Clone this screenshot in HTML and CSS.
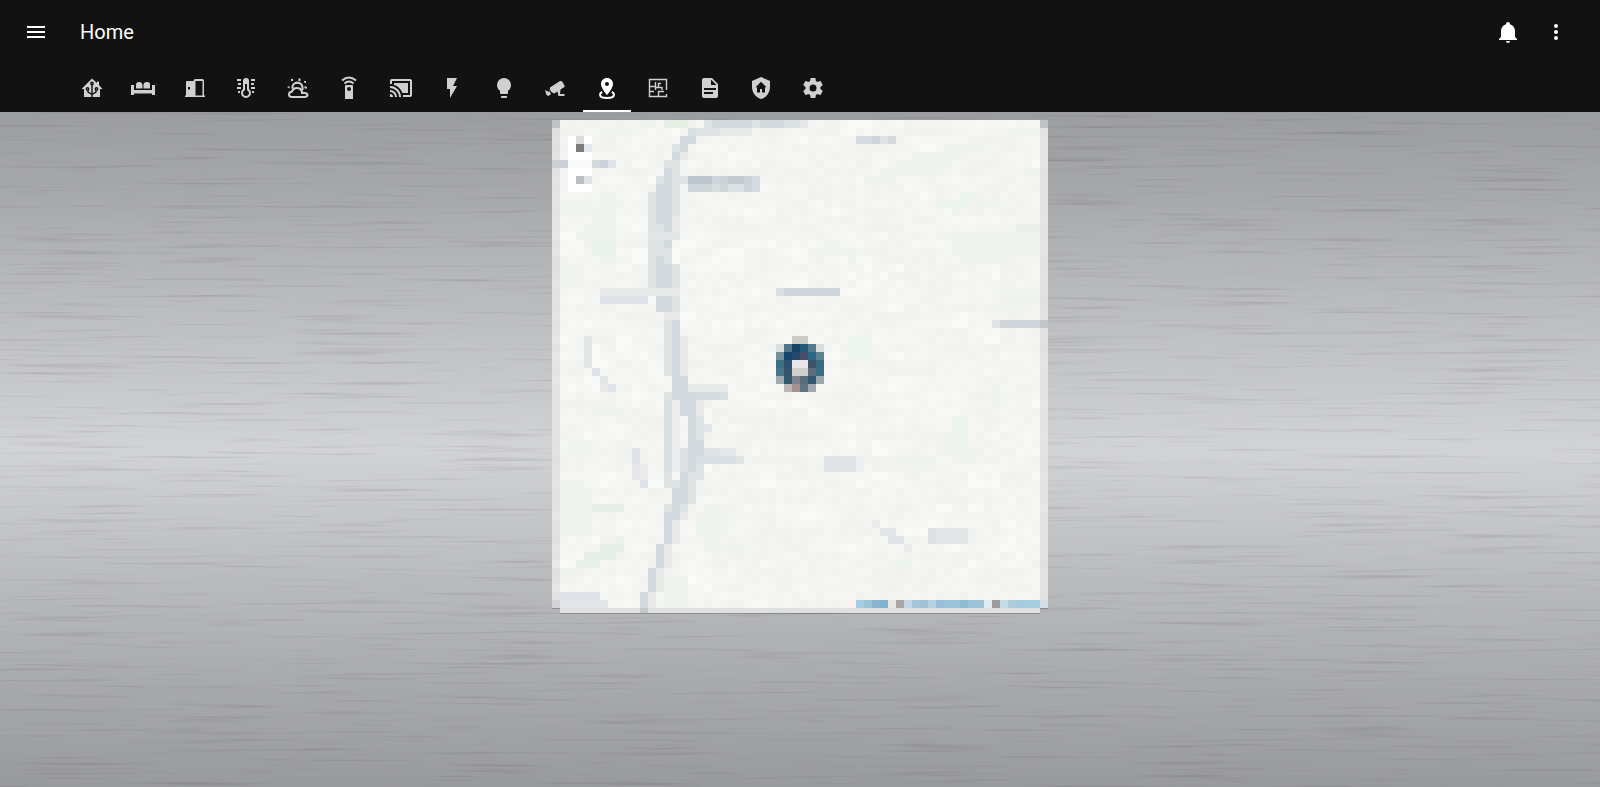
FILE: index.html
```
<!DOCTYPE html>
<html lang="en">
<head>
<meta charset="utf-8">
<meta name="viewport" content="width=device-width, initial-scale=1">
<title>Home</title>
<link rel="stylesheet" href="styles.css">
</head>
<body>
<header class="header">
  <div class="toolbar">
    <button class="icon-button" type="button" aria-label="Menu"><svg class="icon" viewBox="0 0 24 24"><path d="M3 6H21V8H3V6M3 11H21V13H3V11M3 16H21V18H3V16Z"/></svg></button>
    <h1 class="title">Home</h1>
    <button class="icon-button" type="button" aria-label="Notifications"><svg class="icon" viewBox="0 0 24 24"><path d="M21 19V20H3V19L5 17V11C5 7.900 7.030 5.170 10 4.290V4A2 2 0 0 1 14 4V4.290C16.970 5.170 19 7.900 19 11V17L21 19M14 21A2 2 0 0 1 10 21"/></svg></button>
    <button class="icon-button" type="button" aria-label="More options"><svg class="icon" viewBox="0 0 24 24"><path d="M12 16A2 2 0 1 1 12 20A2 2 0 0 1 12 16M12 10A2 2 0 1 1 12 14A2 2 0 0 1 12 10M12 4A2 2 0 1 1 12 8A2 2 0 0 1 12 4Z"/></svg></button>
  </div>
  <nav class="tabs" aria-label="Views">
    <a class="tab" href="#home" aria-label="Home"><svg class="icon" viewBox="0 0 24 24"><path d="M12 2.500L17 7V5.500H19V9L22.500 13H20V21H4V13H1.500Z"/><g class="cut"><path d="M12 9V21M12 18.500L8 16V14M12 18.500L16 16V14"/><circle class="dot" cx="12" cy="7.500" r="1.200"/><circle class="dot" cx="7.500" cy="13" r="1.200"/><circle class="dot" cx="16.500" cy="13" r="1.200"/></g></svg></a>
    <a class="tab" href="#bedroom" aria-label="Bedroom"><svg class="icon" viewBox="0 0 24 24"><path d="M0 9H3V14H21V9H24V19H21V17.500H3V19H0ZM5 12.500V9Q5 6 8 6T11.500 9V12.500ZM12.500 12.500V9Q12.500 6 16 6T19 9V12.500Z"/></svg></a>
    <a class="tab" href="#doors" aria-label="Doors"><svg class="icon" viewBox="0 0 24 24"><path fill-rule="evenodd" d="M2 19.500H3V6Q3 5 4 5H10.500V5Q10.500 3 12.500 3H19Q21 3 21 5V19.500H22V21H2ZM12.500 5V19.500H19.500V5ZM5 11V13.500H7V11Z"/></svg></a>
    <a class="tab" href="#climate" aria-label="Climate"><svg class="icon" viewBox="0 0 24 24"><path fill-rule="evenodd" d="M9 5A3 3 0 0 1 15 5V13A5 5 0 1 1 9 13ZM11 8V14.200A3 3 0 1 0 13 14.200V8Z"/><path d="M3 3H7V5H3ZM4 7H7V9H4ZM3 11H7V13H3ZM4 15H6V17H4ZM17 3H21V5H17ZM17 7H20V9H17ZM17 11H21V13H17ZM18 15H20V17H18Z"/></svg></a>
    <a class="tab" href="#weather" aria-label="Weather"><svg class="icon" viewBox="0 0 24 24"><path class="line" d="M6 21Q3 21 3 18.500Q3 16 6 15.500Q7.500 11.500 11.500 12Q14.500 12 16 15.500V17H19Q21.500 17.500 21.500 19T19 21ZM6.500 12.500Q6 9 8.500 7.500Q12 5.500 15 8Q17 10 16.500 14"/><path d="M5 3H7V5H5ZM12.500 2.500H14.500V5H12.500ZM1 11L3.500 10V12.500ZM18.500 10L21 11V12.500H18.500ZM18 5H20V7L18 6.500Z"/></svg></a>
    <a class="tab" href="#remote" aria-label="Remote"><svg class="icon" viewBox="0 0 24 24"><path fill-rule="evenodd" d="M9 9H15Q16 9 16 10V23H8V10Q8 9 9 9M12 11A2 2 0 1 0 12 15A2 2 0 0 0 12 11"/><path class="line" d="M7.500 7.500Q12 3.500 16.500 7.500M5 4.500Q12-1.500 19 4.500"/></svg></a>
    <a class="tab" href="#media" aria-label="Media"><svg class="icon" viewBox="0 0 24 24"><path d="M21 3H3C1.890 3 1 3.890 1 5V8H3V5H21V19H14V21H21A2 2 0 0 0 23 19V5C23 3.890 22.100 3 21 3M1 10V12A9 9 0 0 1 10 21H12C12 14.920 7.070 10 1 10M19 7H5V8.630C8.960 9.910 12.090 13.040 13.370 17H19M1 14V16A5 5 0 0 1 6 21H8A7 7 0 0 0 1 14M1 18V21H4A3 3 0 0 0 1 18Z"/></svg></a>
    <a class="tab" href="#energy" aria-label="Energy"><svg class="icon" viewBox="0 0 24 24"><path d="M7 2V13H10V22L17 10H13L17 2H7Z"/></svg></a>
    <a class="tab" href="#lights" aria-label="Lights"><svg class="icon" viewBox="0 0 24 24"><path d="M12 2A7 7 0 0 0 5 9C5 11.380 6.190 13.470 8 14.740V17A1 1 0 0 0 9 18H15A1 1 0 0 0 16 17V14.740C17.810 13.470 19 11.380 19 9A7 7 0 0 0 12 2M9 21A1 1 0 0 0 10 22H14A1 1 0 0 0 15 21V20H9V21Z"/></svg></a>
    <a class="tab" href="#cameras" aria-label="Cameras"><svg class="icon" viewBox="0 0 24 24"><path d="M7 11.500L17 5Q18.500 4.500 19.500 6L21.500 9.500V11L17.500 13.500L17 18H21.500V20H15.500L14.500 15.500L11 17.500Q8.500 17 7 14ZM2 14L6 16V14.500L8 18L5.500 20L3.500 19Z"/></svg></a>
    <a class="tab tab-active" href="#map" aria-label="Map" aria-current="page"><svg class="icon" viewBox="0 0 24 24"><path fill-rule="evenodd" d="M12 2C15.500 2 18 4.500 18 8C18 12.500 12 19 12 19S6 12.500 6 8C6 4.500 8.500 2 12 2M12 6A2 2 0 1 0 12 10A2 2 0 0 0 12 6"/><path class="line" d="M7.200 16Q5 17 5 18.500Q5 22 12 22T19 18.500Q19 17 16.800 16"/></svg></a>
    <a class="tab" href="#floorplan" aria-label="Floor plan"><svg class="icon" viewBox="0 0 24 24"><path class="line thin" d="M20.500 14V3.500H3.500V20.500H20.500V18M4 10.500H9.500V6M4 15.500H8M12.500 7V11.500H9.500V14M12.500 7.500H15M12.500 11.500H16V14M12.500 20V15.500H18"/></svg></a>
    <a class="tab" href="#logs" aria-label="Logs"><svg class="icon" viewBox="0 0 24 24"><path d="M13 9H18.500L13 3.500V9M6 2H14L20 8V20A2 2 0 0 1 18 22H6C4.890 22 4 21.100 4 20V4C4 2.890 4.890 2 6 2M15 18V16H6V18H15M18 14V12H6V14H18Z"/></svg></a>
    <a class="tab" href="#security" aria-label="Security"><svg class="icon" viewBox="0 0 24 24"><path fill-rule="evenodd" d="M12 1L21 5V11C21 16.550 17.160 21.740 12 23C6.840 21.740 3 16.550 3 11V5L12 1M12 5.700L6.500 11.200H8V16.500H11V13H13V16.500H16V11.200H17.500Z"/></svg></a>
    <a class="tab" href="#settings" aria-label="Settings"><svg class="icon" viewBox="0 0 24 24"><path d="M12 15.500A3.500 3.500 0 1 1 12 8.500A3.500 3.500 0 0 1 12 15.500M19.430 12.970C19.470 12.650 19.500 12.330 19.500 12C19.500 11.670 19.470 11.340 19.430 11L21.540 9.370C21.730 9.220 21.780 8.950 21.660 8.730L19.660 5.270C19.540 5.050 19.270 4.960 19.050 5.050L16.560 6.050C16.040 5.660 15.500 5.320 14.870 5.070L14.500 2.420C14.460 2.180 14.250 2 14 2H10C9.750 2 9.540 2.180 9.500 2.420L9.130 5.070C8.500 5.320 7.960 5.660 7.440 6.050L4.950 5.050C4.730 4.960 4.460 5.050 4.340 5.270L2.340 8.730C2.210 8.950 2.270 9.220 2.460 9.370L4.570 11C4.530 11.340 4.500 11.670 4.500 12C4.500 12.330 4.530 12.650 4.570 12.970L2.460 14.630C2.270 14.780 2.210 15.050 2.340 15.270L4.340 18.730C4.460 18.950 4.730 19.030 4.950 18.950L7.440 17.940C7.960 18.340 8.500 18.680 9.130 18.930L9.500 21.580C9.540 21.820 9.750 22 10 22H14C14.250 22 14.460 21.820 14.500 21.580L14.870 18.930C15.500 18.670 16.040 18.340 16.560 17.940L19.050 18.950C19.270 19.030 19.540 18.950 19.660 18.730L21.660 15.270C21.780 15.050 21.730 14.780 21.540 14.630L19.430 12.970Z"/></svg></a>
  </nav>
</header>
<main class="view">
  <svg class="brushed" aria-hidden="true">
    <filter id="streaks" x="0" y="0" width="100%" height="100%" color-interpolation-filters="sRGB">
      <feTurbulence type="fractalNoise" baseFrequency="0.007 0.3" numOctaves="3" seed="8"/>
      <feColorMatrix values="0 0 0 0 0.1  0 0 0 0 0.1  0 0 0 0 0.12  0.35 0 0 0 -0.2"/>
    </filter>
    <rect width="100%" height="100%" filter="url(#streaks)"/>
  </svg>
  <section class="map-card" aria-label="Map">
    <svg class="map" id="map" viewBox="0 0 496 493" shape-rendering="crispEdges"></svg>
  </section>
</main>
<script src="map.js"></script>
</body>
</html>
```
FILE: styles.css
```
* { box-sizing: border-box; }

body {
  margin: 0;
  min-height: 100vh;
  display: flex;
  flex-direction: column;
  font-family: Roboto, "Noto Sans", sans-serif;
  font-size: 14px;
  color: #fff;
  background: #98999b;
}

.header { background: #121212; }

.toolbar {
  height: 64px;
  padding: 0 20px 0 12px;
  display: flex;
  align-items: center;
}

.title {
  flex: 1;
  margin: 0 0 0 20px;
  font-size: 20px;
  font-weight: 400;
  line-height: 24px;
}

.icon-button {
  width: 48px;
  height: 48px;
  padding: 12px;
  border: 0;
  background: none;
  color: inherit;
}

.icon {
  display: block;
  width: 24px;
  height: 24px;
  overflow: visible;
  fill: currentColor;
}

.line { fill: none; stroke: currentColor; stroke-width: 2; }
.thin { stroke-width: 1.4; }
.cut { fill: none; stroke: #121212; stroke-width: 1.4; }
.dot { fill: #d0d0d0; }

.tabs {
  height: 48px;
  padding-left: 68px;
  white-space: nowrap;
}

.tab {
  display: inline-block;
  width: 48px;
  height: 48px;
  padding: 12px;
  color: #d0d0d0;
  vertical-align: top;
}

.tab-active {
  color: #fff;
  border-bottom: 2px solid #fff;
}

.view {
  position: relative;
  flex: 1;
  padding: 8px;
  display: flex;
  justify-content: center;
  align-items: flex-start;
  background: linear-gradient(#9c9d9f, #a7a8aa 12%, #b6b7b9 24%, #c8c9cb 41%, #d2d3d5 50%, #c8c9cb 58%, #b9babc 70%, #a7a8aa 86%, #999a9c);
}

.brushed {
  position: absolute;
  inset: 0;
  width: 100%;
  height: 100%;
}

.map-card {
  position: relative;
  width: 100%;
  max-width: 496px;
}

.map {
  display: block;
  width: 100%;
  filter: drop-shadow(0 1px 0 #0003);
}
```
FILE: map.js
```
const CELL = 8;
const COLS = 62;
const ROWS = 62;
const svg = document.getElementById("map");

const colors = {
  road: "#d3dadd", edge: "#dfe3e4", faint: "#e8eaea", label: "#dfe2e6",
  park: "#edf2ed", grass: "#e7eee7", ink: "#d1d6db"
};

function cell(col, row, width, height, fill, opacity) {
  const rect = document.createElementNS("http://www.w3.org/2000/svg", "rect");
  const top = row * CELL;
  rect.setAttribute("x", col * CELL);
  rect.setAttribute("y", top);
  rect.setAttribute("width", width * CELL);
  rect.setAttribute("height", Math.min(height * CELL, 493 - top));
  rect.setAttribute("fill", colors[fill] || fill);
  if (opacity) rect.setAttribute("opacity", opacity);
  svg.appendChild(rect);
}

function hash(x, y) {
  let n = Math.imul(x + 11, 374761393) ^ Math.imul(y + 5, 668265263);
  n = Math.imul(n ^ (n >>> 13), 1274126177);
  return ((n ^ (n >>> 16)) >>> 0) / 4294967296;
}

// Paper-coloured terrain with small tonal variation
for (let row = 0; row < ROWS - 1; row++) {
  for (let col = 0; col < COLS; col++) {
    const tone = hash(col >> 2, row >> 1) * 4 + hash(col >> 1, row) * 4 + hash(col, row) * 4;
    const v = Math.round(239 + tone);
    cell(col, row, 1, 1, `rgb(${v},${v},${v - 2})`);
  }
}

// Each entry: column row width height colour
const areas = `
6 9 2 2 park;5 11 3 2 park;4 13 4 2 park;5 15 3 2 #ebf2eb;3 14 2 1 #eff3ef;6 17 2 1 park;1 10 4 2 #f0f4f1;1 18 3 3 #f0f3f0;6 1 4 1 #eff4f0;14 0 3 1 #e6ede5;11 0 2 1 #edf2ec
50 14 7 3 park;51 17 6 1 park;58 14 3 3 park;58 13 3 1 #eaefeb;57 14 1 3 #eff2ef;57 22 4 1 park;56 21 5 1 #f0f4f0;54 23 5 1 #f0f3f0
49 3 5 1 park;45 4 6 1 park;43 5 7 1 park;41 6 7 1 park;39 7 4 1 park;59 6 2 1 #edf2ee;57 1 3 1 #f0f4f0
51 9 2 1 #edf3ed;48 10 4 1 #edf3ed;50 11 1 1 park;34 15 2 2 #f0f4f0;37 16 1 2 park;37 27 3 3 #eef4ef;54 10 2 1 #eff4f0
1 46 4 6 park;1 45 3 1 park;5 48 4 1 #e7ede8;6 53 3 1 grass;4 54 4 1 grass;3 55 3 1 #e8f0e9;8 52 1 1 #eaf2eb;1 56 2 1 #edf2ed
5 36 4 1 #edf2ed;2 40 3 2 #f0f4f0;19 48 2 6 #eef3ee;21 49 1 3 #eff4ef;14 57 3 4 #eef3ee;18 50 1 2 #ecf3ec;22 53 2 1 #eef3ee
50 37 2 5 #ecf3ed;49 39 2 3 park;43 42 5 1 #edf2ee;44 43 4 1 #f0f3f0;43 55 2 1 #edf3ee;55 33 1 3 #edf2ed;51 41 2 2 #edf2ee
20 0 5 1 road;19 0 1 1 edge;25 0 1 1 edge;26 0 3 1 road;29 0 2 1 #dbe1e2;31 0 1 1 #e6e8e8
17 1 1 1 #d9e0e2;18 1 3 1 edge;21 1 4 1 faint;16 2 2 1 road;18 2 1 1 #f2f4f3;15 3 1 1 edge;16 3 1 1 road;15 4 1 1 road;16 4 1 1 faint
14 5 1 1 edge;15 5 1 1 edge;14 6 1 3 road;15 6 1 6 edge;13 7 1 1 edge;13 8 2 6 road;15 12 1 2 faint;12 9 1 4 edge;12 13 2 1 edge
12 14 4 1 #e2e6e6;12 15 2 3 edge;14 15 1 1 road;14 16 1 2 edge;13 17 1 4 road;14 18 1 3 road;12 18 1 3 edge;15 18 1 3 edge
6 21 10 1 faint;6 22 6 1 label;13 22 2 2 road;15 22 1 2 edge;14 24 2 1 faint;14 25 1 7 edge;15 25 1 7 road;16 27 1 6 faint
17 7 3 1 #bcc5cd;20 7 1 1 #d0d7dc;21 7 1 1 #cbd2d8;22 7 2 1 #c3cbd2;24 7 1 1 #cbd2d8;25 7 1 2 #d5dbde;17 8 3 1 #d0d7db;20 8 1 1 #d8dde0;21 8 1 1 #d0d7db;22 8 2 1 #dde1e4;24 8 1 1 #cdd4d9;16 7 1 1 edge
28 21 1 1 #d9dee1;29 21 7 1 ink;38 2 2 1 #d6dbdf;40 2 1 1 #cdd3d8;41 2 1 1 #e0e3e6;42 2 1 1 #d3d9dc;55 25 1 1 #e0e4e6;56 25 6 1 ink
4 27 1 4 #e2e6e7;5 31 1 1 label;6 32 1 1 #e4e7e8;7 33 1 1 #e1e5ea;6 33 1 1 faint
15 32 2 2 road;17 33 5 1 faint;14 34 1 1 edge;15 34 3 1 road;18 34 3 1 #d6dbdf;21 34 1 1 #dadfe2
14 35 1 9 #d9dfe0;15 35 1 9 #eceeed;16 35 1 2 road;17 35 1 1 road;18 35 1 2 faint;17 36 1 7 road;18 37 1 3 edge;19 38 1 1 #e3e6e8
18 40 1 2 road;16 41 1 3 #dce2e3;19 41 2 1 edge;21 41 2 1 #e6e9ea;18 42 5 1 #d9dee2;23 42 1 1 #e0e4e5;17 43 1 1 road;18 43 1 2 edge
14 44 1 1 edge;16 44 1 1 road;17 44 1 1 edge;14 45 2 1 edge;16 45 1 1 road;17 45 1 1 edge;15 46 2 2 road;17 46 1 2 edge
14 48 1 1 edge;15 48 1 1 road;16 48 1 1 edge;14 49 2 1 road;16 49 1 1 faint
10 41 1 2 label;10 43 1 2 #e5e7ea;11 43 1 2 #e8eaeb;11 45 1 1 label;34 42 4 2 #e1e5e7;38 42 1 2 #edefee
40 50 1 1 #e8eaec;41 51 2 1 #e4e7e9;42 52 2 1 #e1e5e7;44 53 1 1 #e9ebec;47 51 5 2 #e3e7e8;47 51 1 2 #dce2e3
1 59 5 1 label;0 60 7 1 #e3e6e8`;

areas.trim().split(/[;\n]+/).forEach((entry) => {
  const [col, row, width, height, color] = entry.split(" ");
  cell(+col, +row, +width, +height, color);
});

// The river narrows on its way to the lower edge
[[14, 50], [14, 51], [14, 52], [13, 53], [13, 54], [13, 55], [12, 56], [12, 57], [12, 58], [11, 59], [11, 60]].forEach(([col, row]) => {
  cell(col, row, 1, 1, "road");
  cell(col + 1, row, 1, 1, "faint");
});

// Card border
cell(0, 1, 1, 60, "#000", "0.070");
cell(61, 1, 1, 60, "#000", "0.070");
cell(0, 0, 1, 1, "#c1c2c3");
cell(61, 0, 1, 1, "#c1c2c3");
cell(1, 61, 60, 1, "#dfe1df");
cell(11, 61, 1, 1, "#c2c9cb");

// Zoom control and the place label behind it
cell(0, 5, 2, 1, "#ccd0d4");
cell(5, 5, 1, 1, "#d5dade");
cell(6, 5, 1, 1, "#ccd2db");
cell(7, 5, 1, 1, "#e0e3e8");
cell(2, 2, 3, 7, "#fff");
cell(2, 5, 3, 1, "#fafafa");
cell(3, 2, 1, 1, "#dcdcdc");
cell(3, 3, 1, 1, "#7d7d7d");
cell(4, 3, 1, 1, "#e2e8ec");
cell(3, 7, 1, 1, "#bdbdbd");
cell(4, 7, 1, 1, "#dfe3e6");

function strip(col, row, fills) {
  fills.split(" ").forEach((fill, i) => {
    if (fill !== "-") cell(col + i, row, 1, 1, fill);
  });
}

// Person marker
strip(28, 27, "- - #cbcbca #cbcbca");
strip(28, 28, "#dcdfdf #527686 #134265 #235a7c #527b8b #d9dcdc");
strip(28, 29, "#73929b #15456a #27476d #474f6b #2b6685 #5c8190");
strip(28, 30, "#3a7081 #2f5070 #eae7ec #ede5ea #40536d #376d82");
strip(28, 31, "#487487 #35536f #cfcecb #cfcecb #5e6b7c #396f85");
strip(28, 32, "#a0adb4 #31586f #7c828e #5a6c7a #34586f #98a8af");
strip(28, 33, "- #bbb7b8 #a68f91 #5f7681 #a3a9b1");

// Attribution
strip(37, 60, "#fdf0ee #a3cde0 #9fc3d6 #8cb4d0 #80b4cf #e6e8e6 #aca5a1 #c4d8e4 #a3c4d9 #a0c3d8 #b5d2df #98bfd7 #9bc3da #9bc3da #8dbbd0 #9bc3da #9fc4d5 #e0edf0 #9f9c9e #c6dde6 #aecdda #a5cadb #a5cde0 #a5cde0 #d3dde5");
```
